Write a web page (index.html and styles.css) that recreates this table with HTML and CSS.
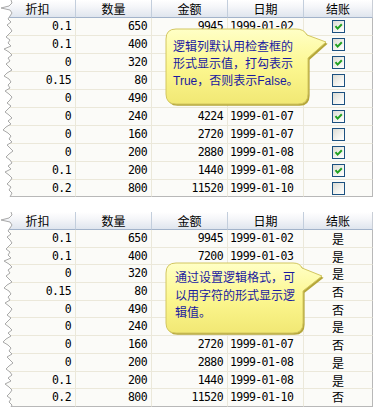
FILE: index.html
```html
<!DOCTYPE html>
<html>
<head>
<meta charset="utf-8">
<link rel="stylesheet" href="styles.css">
</head>
<body>
<svg class="sprite" width="0" height="0">
  <defs>
    <symbol id="ck" viewBox="0 0 11 11">
      <polyline points="2.5,5.2 4.6,7.6 8.8,3.2" fill="none" stroke="#21a121" stroke-width="2"/>
    </symbol>
    <symbol id="tearShape" viewBox="0 0 16 197">
      <polygon fill="#ffffff" points="0,0 11,0 12,3 9,6 1,8 10,10 12,13 10,16 8,19 11,22 7,25 10,28 12,31 9,34 6,37 10,40 8,43 11,46 4,49 9,52 12,55 8,58 10,61 6,64 9,67 12,70 7,73 4,76 9,79 11,82 8,85 10,88 5,91 9,94 12,97 10,100 7,103 11,106 8,109 5,112 9,115 12,118 8,121 11,124 6,127 3,130 8,133 11,136 9,139 12,142 7,145 10,148 13,151 9,154 6,157 10,160 12,163 8,166 11,169 5,172 9,175 12,178 10,181 7,184 11,187 9,190 12,193 10,197 0,197"/>
      <polyline fill="none" stroke="#a9a9a9" stroke-width="1" points="11,0 12,3 9,6 1,8 10,10 12,13 10,16 8,19 11,22 7,25 10,28 12,31 9,34 6,37 10,40 8,43 11,46 4,49 9,52 12,55 8,58 10,61 6,64 9,67 12,70 7,73 4,76 9,79 11,82 8,85 10,88 5,91 9,94 12,97 10,100 7,103 11,106 8,109 5,112 9,115 12,118 8,121 11,124 6,127 3,130 8,133 11,136 9,139 12,142 7,145 10,148 13,151 9,154 6,157 10,160 12,163 8,166 11,169 5,172 9,175 12,178 10,181 7,184 11,187 9,190 12,193 10,197"/>
    </symbol>
    <linearGradient id="bub" x1="0" y1="0" x2="0" y2="1">
      <stop offset="0" stop-color="#ffffc6"/>
      <stop offset="0.5" stop-color="#fcf790"/>
      <stop offset="1" stop-color="#f1e874"/>
    </linearGradient>
  </defs>
</svg>

<div class="page">
  <div class="table t1">
    <div class="row head"><div class="c">折扣</div><div class="c">数量</div><div class="c">金额</div><div class="c">日期</div><div class="c">结账</div></div>
    <div class="row"><div class="c num">0.1</div><div class="c num">650</div><div class="c num">9945</div><div class="c date">1999-01-02</div><div class="c chk"><span class="box"><svg class="mark"><use href="#ck"/></svg></span></div></div>
    <div class="row"><div class="c num">0.1</div><div class="c num">400</div><div class="c num"></div><div class="c date"></div><div class="c chk"><span class="box"><svg class="mark"><use href="#ck"/></svg></span></div></div>
    <div class="row"><div class="c num">0</div><div class="c num">320</div><div class="c num"></div><div class="c date"></div><div class="c chk"><span class="box"><svg class="mark"><use href="#ck"/></svg></span></div></div>
    <div class="row"><div class="c num">0.15</div><div class="c num">80</div><div class="c num"></div><div class="c date"></div><div class="c chk"><span class="box"></span></div></div>
    <div class="row"><div class="c num">0</div><div class="c num">490</div><div class="c num"></div><div class="c date"></div><div class="c chk"><span class="box"></span></div></div>
    <div class="row"><div class="c num">0</div><div class="c num">240</div><div class="c num">4224</div><div class="c date">1999-01-07</div><div class="c chk"><span class="box"><svg class="mark"><use href="#ck"/></svg></span></div></div>
    <div class="row"><div class="c num">0</div><div class="c num">160</div><div class="c num">2720</div><div class="c date">1999-01-07</div><div class="c chk"><span class="box"></span></div></div>
    <div class="row"><div class="c num">0</div><div class="c num">200</div><div class="c num">2880</div><div class="c date">1999-01-08</div><div class="c chk"><span class="box"><svg class="mark"><use href="#ck"/></svg></span></div></div>
    <div class="row"><div class="c num">0.1</div><div class="c num">200</div><div class="c num">1440</div><div class="c date">1999-01-08</div><div class="c chk"><span class="box"><svg class="mark"><use href="#ck"/></svg></span></div></div>
    <div class="row last"><div class="c num">0.2</div><div class="c num">800</div><div class="c num">11520</div><div class="c date">1999-01-10</div><div class="c chk"><span class="box"></span></div></div>

    <svg class="tear" width="16" height="197"><use href="#tearShape"/></svg>

    <div class="callout c1">
      <svg class="bubble" width="175" height="90" viewBox="160 24 175 90">
        <path fill="#b5a73a" transform="translate(1.6,1.8)" d="M176 29 H296 Q304 29 307 35 L326 42 L308 58 V94 Q308 104 298 104 H176 Q166 104 166 94 V39 Q166 29 176 29 Z"/>
        <path fill="url(#bub)" stroke="#d2c660" stroke-width="1" d="M176 29 H296 Q304 29 307 35 L326 42 L308 58 V94 Q308 104 298 104 H176 Q166 104 166 94 V39 Q166 29 176 29 Z"/>
      </svg>
      <p class="tip t-a">逻辑列默认用检查框的<br>形式显示值，打勾表示<br>True，否则表示False。</p>
    </div>
  </div>

  <div class="table t2">
    <div class="row head"><div class="c">折扣</div><div class="c">数量</div><div class="c">金额</div><div class="c">日期</div><div class="c">结账</div></div>
    <div class="row"><div class="c num">0.1</div><div class="c num">650</div><div class="c num">9945</div><div class="c date">1999-01-02</div><div class="c yn">是</div></div>
    <div class="row"><div class="c num">0.1</div><div class="c num">400</div><div class="c num">7200</div><div class="c date">1999-01-03</div><div class="c yn">是</div></div>
    <div class="row"><div class="c num">0</div><div class="c num">320</div><div class="c num"></div><div class="c date"></div><div class="c yn">是</div></div>
    <div class="row"><div class="c num">0.15</div><div class="c num">80</div><div class="c num"></div><div class="c date"></div><div class="c yn">否</div></div>
    <div class="row"><div class="c num">0</div><div class="c num">490</div><div class="c num"></div><div class="c date"></div><div class="c yn">否</div></div>
    <div class="row"><div class="c num">0</div><div class="c num">240</div><div class="c num"></div><div class="c date"></div><div class="c yn">是</div></div>
    <div class="row"><div class="c num">0</div><div class="c num">160</div><div class="c num">2720</div><div class="c date">1999-01-07</div><div class="c yn">否</div></div>
    <div class="row"><div class="c num">0</div><div class="c num">200</div><div class="c num">2880</div><div class="c date">1999-01-08</div><div class="c yn">是</div></div>
    <div class="row"><div class="c num">0.1</div><div class="c num">200</div><div class="c num">1440</div><div class="c date">1999-01-08</div><div class="c yn">是</div></div>
    <div class="row last"><div class="c num">0.2</div><div class="c num">800</div><div class="c num">11520</div><div class="c date">1999-01-10</div><div class="c yn">否</div></div>

    <svg class="tear" width="16" height="197"><use href="#tearShape"/></svg>

    <div class="callout c2">
      <svg class="bubble" width="170" height="80" viewBox="160 46 170 80">
        <path fill="#b5a73a" transform="translate(1.6,1.8)" d="M176 51 H293 Q300 51 302 56 L322 64 L303 79 V111 Q303 121 293 121 H176 Q166 121 166 111 V61 Q166 51 176 51 Z"/>
        <path fill="url(#bub)" stroke="#d2c660" stroke-width="1" d="M176 51 H293 Q300 51 302 56 L322 64 L303 79 V111 Q303 121 293 121 H176 Q166 121 166 111 V61 Q166 51 176 51 Z"/>
      </svg>
      <p class="tip t-b">通过设置逻辑格式，可<br>以用字符的形式显示逻<br>辑值。</p>
    </div>
  </div>
</div>
</body>
</html>
```

FILE: styles.css
```css
html, body {
  margin: 0;
  padding: 0;
  background: #ffffff;
}

body {
  font-family: "Noto Sans CJK SC", sans-serif;
  color: #000;
}

.sprite {
  position: absolute;
  width: 0;
  height: 0;
  overflow: hidden;
}

.page {
  width: 374px;
}

.table {
  position: relative;
  width: 373px;
}

.t2 {
  margin-top: 15px;
}

.row {
  display: grid;
  grid-template-columns: 76px 76px 76px 76px 69px;
  height: 18px;
}

.t2 .row:not(.head) {
  height: 17.7px;
}

.row > .c {
  box-sizing: border-box;
  border-right: 1px solid #ebe8da;
  border-bottom: 1px solid #ebe8da;
  background: #fbfbf8;
  font-size: 11.5px;
  line-height: 17px;
  white-space: nowrap;
  overflow: hidden;
}

.row > .c:last-child {
  border-right-color: #b8b8b8;
}

.row.last {
  height: 17px;
}

.row.last > .c {
  border-bottom-color: #b8b8b8;
  line-height: 16px;
}

.head > .c {
  background: linear-gradient(#ffffff 0%, #f5f6f9 40%, #dfe5ee 100%);
  border-right-color: #c3cedc;
  border-bottom-color: #a2b3ca;
  font: 12px/17px "Noto Sans CJK SC", sans-serif;
  text-align: center;
  color: #000;
}

.head > .c:last-child {
  border-right-color: #c9ced6;
}

.num {
  text-align: right;
  padding-right: 4px;
  font-family: "DejaVu Sans Mono", monospace;
  letter-spacing: -0.6px;
}

.date {
  padding-left: 2px;
  font-family: "DejaVu Sans Mono", monospace;
  letter-spacing: -0.6px;
}

.chk {
  display: flex;
  align-items: center;
  justify-content: center;
}

.box {
  display: block;
  width: 13px;
  height: 13px;
  box-sizing: border-box;
  border: 1px solid #1c5180;
  background: linear-gradient(135deg, #dcdcd4 0%, #f4f4f0 60%, #ffffff 100%);
}

.mark {
  display: block;
  width: 11px;
  height: 11px;
}

.yn {
  text-align: center;
  font-family: "Noto Sans CJK SC", sans-serif;
  font-size: 12px !important;
}

.tear {
  position: absolute;
  left: 0;
  top: 0;
}

.callout {
  position: absolute;
}

.c1 {
  left: 160px;
  top: 24px;
  width: 175px;
  height: 90px;
}

.c2 {
  left: 160px;
  top: 46px;
  width: 170px;
  height: 80px;
}

.bubble {
  position: absolute;
  left: 0;
  top: 0;
}

.tip {
  position: relative;
  margin: 0;
  font-family: "Liberation Sans", "Noto Sans CJK SC", sans-serif;
  font-size: 12px;
  color: #1a1aa0;
  white-space: nowrap;
}

.t-a {
  padding: 15px 0 0 13px;
  line-height: 17px;
}

.t-b {
  padding: 12px 0 0 15px;
  line-height: 17.5px;
}
```
